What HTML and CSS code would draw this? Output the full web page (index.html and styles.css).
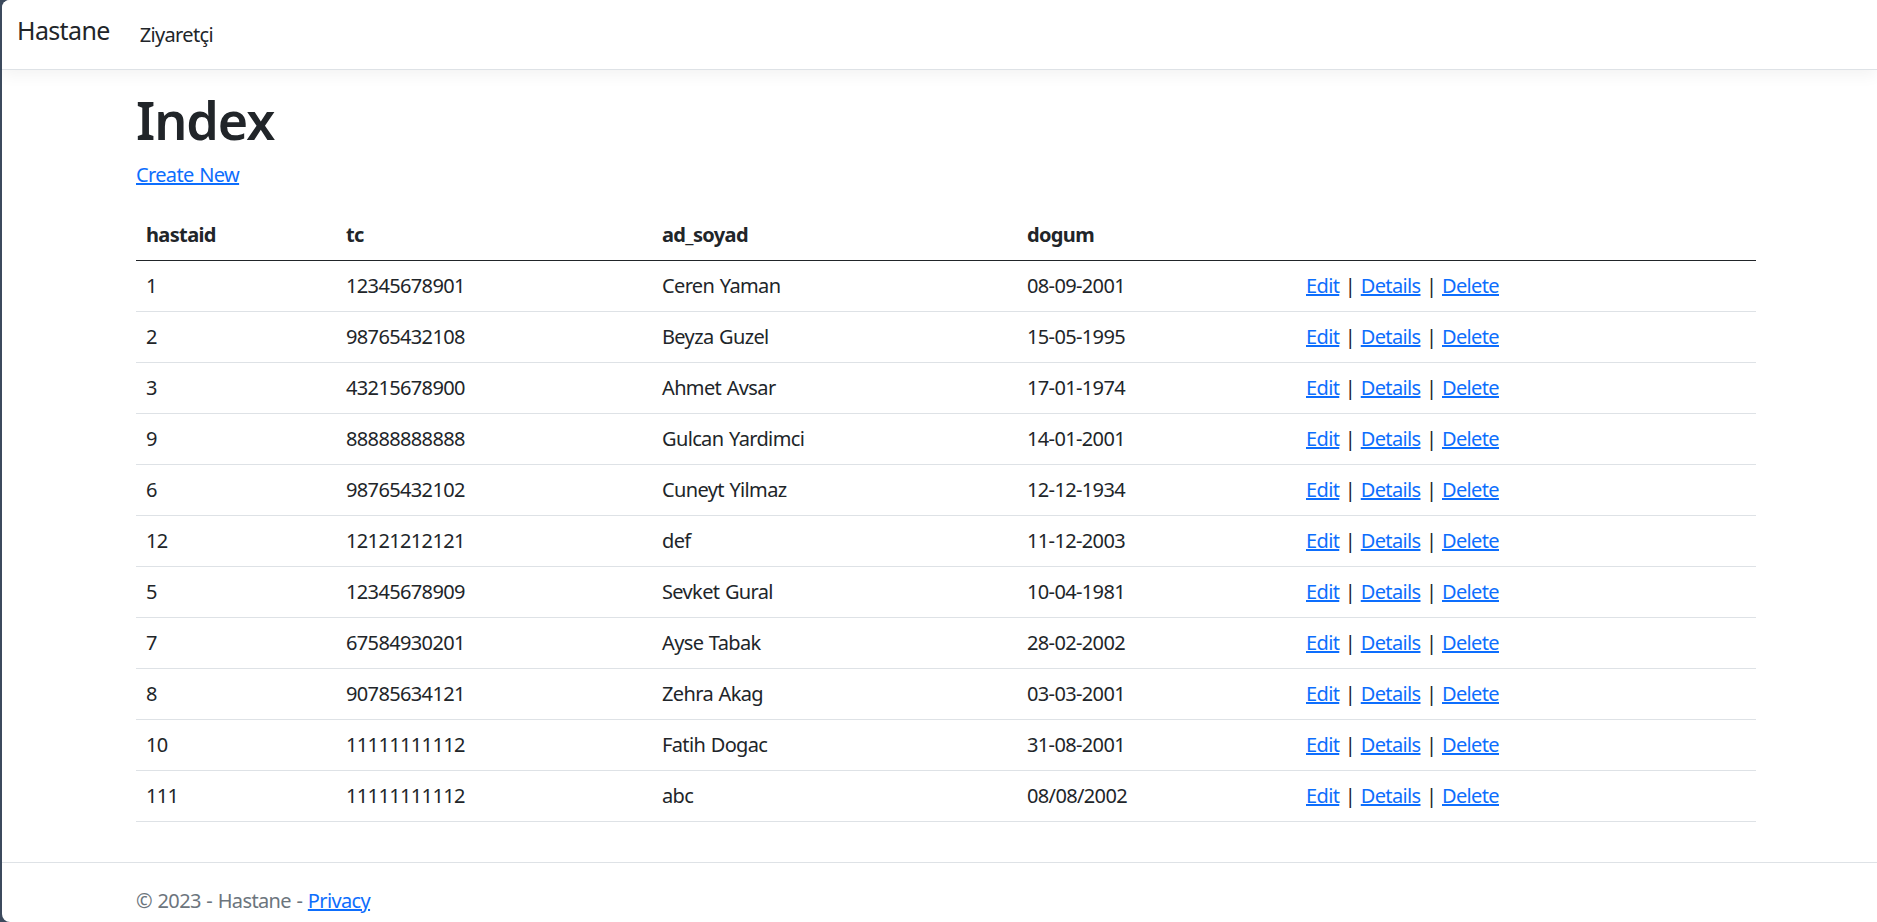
FILE: index.html
```html
<!DOCTYPE html>
<html lang="tr">
<head>
<meta charset="utf-8">
<title>Index - Hastane</title>
<link rel="stylesheet" href="styles.css">
</head>
<body>
<div class="frame">
  <header class="navbar">
    <div class="navbar-inner">
      <a class="brand" href="#">Hastane</a>
      <a class="nav-link" href="#">Ziyaretçi</a>
    </div>
  </header>
  <main class="container main">
    <h1 class="title">Index</h1>
    <p class="actions"><a href="#">Create New</a></p>
    <table class="table">
      <colgroup>
        <col class="c1"><col class="c2"><col class="c3"><col class="c4"><col class="c5">
      </colgroup>
      <thead>
        <tr><th>hastaid</th><th>tc</th><th>ad_soyad</th><th>dogum</th><th></th></tr>
      </thead>
      <tbody>
        <tr><td>1</td><td>12345678901</td><td>Ceren Yaman</td><td>08-09-2001</td><td><a href="#">Edit</a> | <a href="#">Details</a> | <a href="#">Delete</a></td></tr>
        <tr><td>2</td><td>98765432108</td><td>Beyza Guzel</td><td>15-05-1995</td><td><a href="#">Edit</a> | <a href="#">Details</a> | <a href="#">Delete</a></td></tr>
        <tr><td>3</td><td>43215678900</td><td>Ahmet Avsar</td><td>17-01-1974</td><td><a href="#">Edit</a> | <a href="#">Details</a> | <a href="#">Delete</a></td></tr>
        <tr><td>9</td><td>88888888888</td><td>Gulcan Yardimci</td><td>14-01-2001</td><td><a href="#">Edit</a> | <a href="#">Details</a> | <a href="#">Delete</a></td></tr>
        <tr><td>6</td><td>98765432102</td><td>Cuneyt Yilmaz</td><td>12-12-1934</td><td><a href="#">Edit</a> | <a href="#">Details</a> | <a href="#">Delete</a></td></tr>
        <tr><td>12</td><td>12121212121</td><td>def</td><td>11-12-2003</td><td><a href="#">Edit</a> | <a href="#">Details</a> | <a href="#">Delete</a></td></tr>
        <tr><td>5</td><td>12345678909</td><td>Sevket Gural</td><td>10-04-1981</td><td><a href="#">Edit</a> | <a href="#">Details</a> | <a href="#">Delete</a></td></tr>
        <tr><td>7</td><td>67584930201</td><td>Ayse Tabak</td><td>28-02-2002</td><td><a href="#">Edit</a> | <a href="#">Details</a> | <a href="#">Delete</a></td></tr>
        <tr><td>8</td><td>90785634121</td><td>Zehra Akag</td><td>03-03-2001</td><td><a href="#">Edit</a> | <a href="#">Details</a> | <a href="#">Delete</a></td></tr>
        <tr><td>10</td><td>11111111112</td><td>Fatih Dogac</td><td>31-08-2001</td><td><a href="#">Edit</a> | <a href="#">Details</a> | <a href="#">Delete</a></td></tr>
        <tr><td>111</td><td>11111111112</td><td>abc</td><td>08/08/2002</td><td><a href="#">Edit</a> | <a href="#">Details</a> | <a href="#">Delete</a></td></tr>
      </tbody>
    </table>
  </main>
  <footer class="footer">
    <div class="container">&copy; 2023 - Hastane - <a href="#">Privacy</a></div>
  </footer>
</div>
</body>
</html>
```

FILE: styles.css
```css
html, body {
  margin: 0;
  padding: 0;
  height: 100%;
  overflow: hidden;
}
html {
  background: #3c4a5d;
}
body {
  font-family: "Noto Sans", "Open Sans", sans-serif;
  font-size: 20px;
  line-height: 30px;
  letter-spacing: -0.032em;
  word-spacing: 1px;
  color: #212529;
}
a {
  color: #0d6efd;
  text-decoration: underline;
}
.frame {
  margin-left: 2px;
  height: 922px;
  background: #fff;
  border-top-left-radius: 8px;
  border-bottom-left-radius: 8px;
  overflow: hidden;
  display: flex;
  flex-direction: column;
}
.navbar {
  flex: none;
  height: 69px;
  border-bottom: 1px solid #dee2e6;
  box-shadow: 0 5px 15px rgba(0, 0, 0, 0.05);
  background: #fff;
  position: relative;
  z-index: 1;
}
.navbar-inner {
  height: 100%;
  padding: 0 15px;
  display: flex;
  align-items: center;
}
.brand {
  font-size: 25px;
  line-height: 37px;
  color: #212529;
  text-decoration: none;
  margin-right: 20px;
  margin-top: -8px;
}
.nav-link {
  padding: 0 10px;
  color: #212529;
  text-decoration: none;
  font-size: 20px;
  line-height: 30px;
}
.container {
  width: 1620px;
  padding: 0 15px;
  margin-left: 119px;
}
.main {
  flex: none;
  padding-top: 20px;
  padding-bottom: 20px;
}
.title {
  margin: 0 0 10px;
  font-size: 52px;
  line-height: 60px;
  font-weight: 600;
  letter-spacing: -0.02em;
}
.actions {
  margin: 0 0 20px;
}
.table {
  width: 1620px;
  border-collapse: collapse;
  margin-bottom: 20px;
}
.c1 { width: 200px; }
.c2 { width: 316px; }
.c3 { width: 365px; }
.c4 { width: 279px; }
.c5 { width: 460px; }
.table th,
.table td {
  padding: 10px;
  text-align: left;
  vertical-align: top;
  border-bottom: 1px solid #dee2e6;
}
.table th {
  font-weight: 700;
  border-bottom: 1px solid #212529;
}
.footer {
  flex: none;
  border-top: 1px solid #dee2e6;
  line-height: 75px;
  color: #6c757d;
}
```
